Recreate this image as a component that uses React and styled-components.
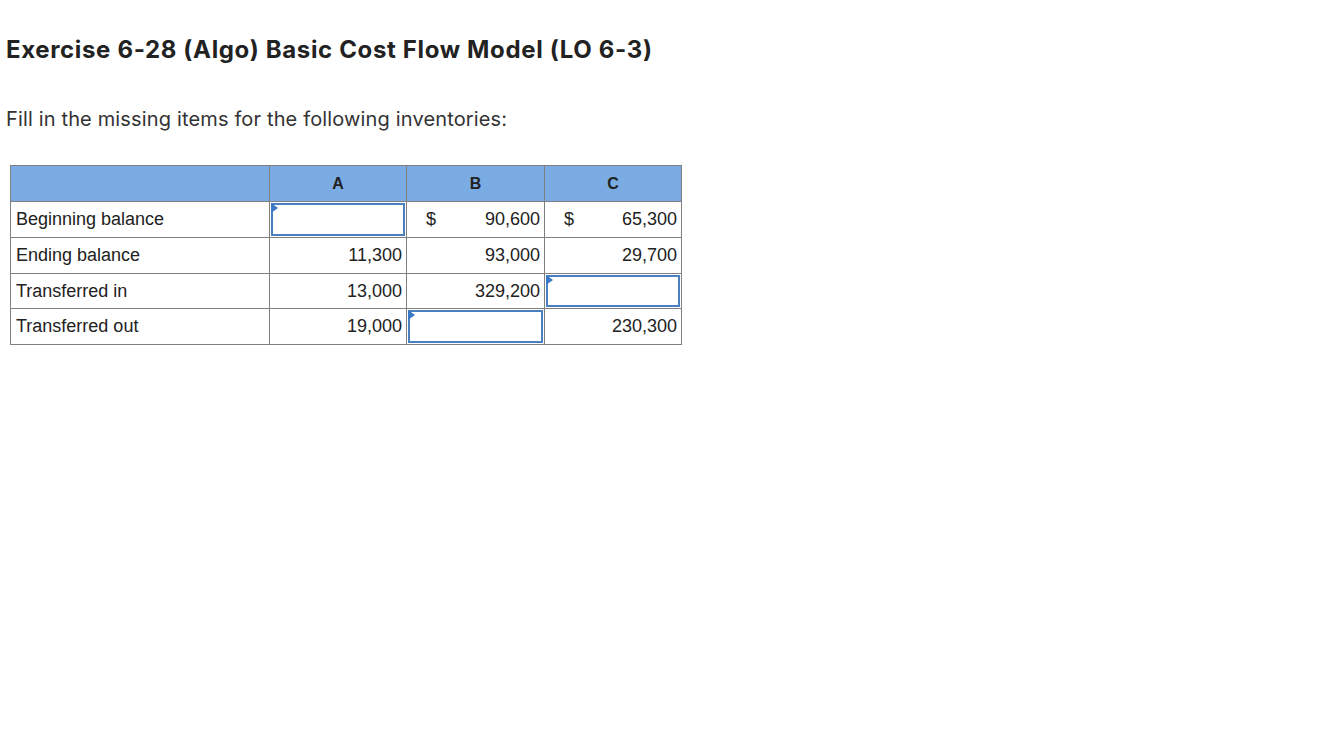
import React from "react";
import styled, { createGlobalStyle } from "styled-components";

const Global = createGlobalStyle`
  html, body { margin: 0; padding: 0; background: #fff; }
  body { font-family: Inter, Lato, sans-serif; color: #222; }
`;

const Page = styled.div`
  padding: 34px 6px 0 6px;
`;

const Title = styled.h1`
  margin: 0;
  font-family: Inter, Lato, sans-serif;
  font-weight: 700;
  font-size: 24px;
  line-height: 32px;
  letter-spacing: 0.65px;
  color: #222;
`;

const Prompt = styled.p`
  margin: 39px 0 0 0;
  font-family: Inter, Lato, sans-serif;
  font-weight: 400;
  font-size: 20px;
  line-height: 28px;
  letter-spacing: 0.15px;
  color: #333;
`;

const Table = styled.table`
  margin: 32px 0 0 4px;
  border-collapse: collapse;
  table-layout: fixed;
  width: 671px;
  font-family: "Liberation Sans", Arial, sans-serif;
  font-size: 18px;
  color: #222;
`;

const Th = styled.th`
  background: #7aace3;
  border: 1px solid #808080;
  height: 35px;
  padding: 0;
  font-weight: 700;
  font-size: 16px;
  color: #222;
`;

const Td = styled.td`
  border: 1px solid #808080;
  height: ${(p) => (p.$short ? "34px" : "35px")};
  padding: 0 ${(p) => (p.$label || p.$input ? "0" : "4px")} 0
    ${(p) => (p.$label ? "5px" : "0")};
  text-align: ${(p) => (p.$label ? "left" : "right")};
  white-space: nowrap;
`;

const Money = styled.div`
  display: flex;
  justify-content: space-between;
  padding-left: 19px;
`;

const InputBox = styled.div`
  position: relative;
  margin: 1px;
  height: ${(p) => (p.$short ? "32px" : "33px")};
  border: 2px solid #4a7fc0;
  box-sizing: border-box;
  background: #fff;
  &::before {
    content: "";
    position: absolute;
    left: -2px;
    top: -2px;
    width: 0;
    height: 0;
    border-top: 5px solid transparent;
    border-bottom: 5px solid transparent;
    border-left: 7px solid #3a78c8;
  }
`;

const rows = [
  { label: "Beginning balance", a: null, b: "90,600", c: "65,300", dollar: true },
  { label: "Ending balance", a: "11,300", b: "93,000", c: "29,700" },
  { label: "Transferred in", a: "13,000", b: "329,200", c: null, short: true },
  { label: "Transferred out", a: "19,000", b: null, c: "230,300" },
];

function Cell({ value, dollar, short }) {
  if (value === null) {
    return (
      <Td $input $short={short}>
        <InputBox $short={short} />
      </Td>
    );
  }
  return (
    <Td $short={short}>
      {dollar ? (
        <Money>
          <span>$</span>
          <span>{value}</span>
        </Money>
      ) : (
        value
      )}
    </Td>
  );
}

export default function App() {
  return (
    <Page>
      <Global />
      <Title>Exercise 6-28 (Algo) Basic Cost Flow Model (LO 6-3)</Title>
      <Prompt>Fill in the missing items for the following inventories:</Prompt>
      <Table>
        <colgroup>
          <col style={{ width: 259 }} />
          <col style={{ width: 137 }} />
          <col style={{ width: 138 }} />
          <col style={{ width: 137 }} />
        </colgroup>
        <thead>
          <tr>
            <Th></Th>
            <Th>A</Th>
            <Th>B</Th>
            <Th>C</Th>
          </tr>
        </thead>
        <tbody>
          {rows.map((r) => (
            <tr key={r.label}>
              <Td $label $short={r.short}>{r.label}</Td>
              <Cell value={r.a} dollar={r.dollar} short={r.short} />
              <Cell value={r.b} dollar={r.dollar} short={r.short} />
              <Cell value={r.c} dollar={r.dollar} short={r.short} />
            </tr>
          ))}
        </tbody>
      </Table>
    </Page>
  );
}
